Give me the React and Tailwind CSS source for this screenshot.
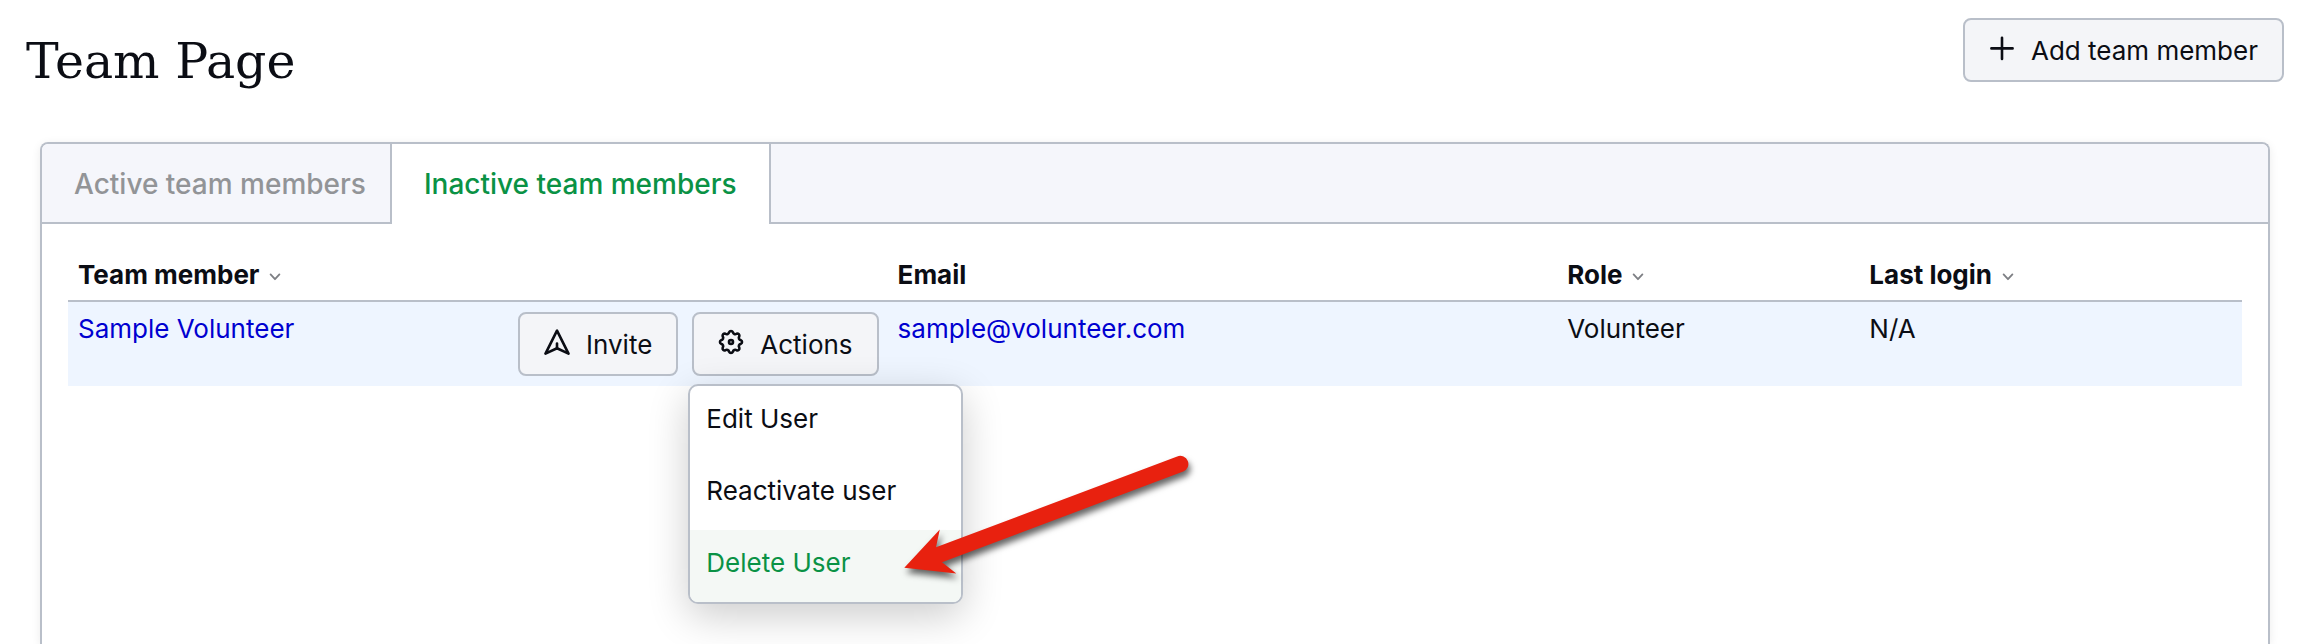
import { useState } from 'react';
import clsx from 'clsx';

const members = [
  { name: 'Sample Volunteer', email: 'sample@volunteer.com', role: 'Volunteer', lastLogin: 'N/A' },
];

const menuItems = ['Edit User', 'Reactivate user', 'Delete User'];

// Eight rounded teeth, each followed by a rounded notch
function cogPath(center, radius) {
  const point = (deg) => {
    const rad = (deg * Math.PI) / 180;
    return `${(center + radius * Math.cos(rad)).toFixed(2)} ${(center + radius * Math.sin(rad)).toFixed(2)}`;
  };
  let d = `M${point(-11)}`;
  for (let i = 0; i < 8; i++) {
    d += `A2.1 2.1 0 0 1 ${point(i * 45 + 11)}A2.3 2.3 0 0 0 ${point(i * 45 + 34)}`;
  }
  return `${d}Z`;
}

function PlusIcon() {
  return (
    <svg width="26" height="26" viewBox="0 0 26 26" fill="none" stroke="currentColor" strokeWidth="2.6" strokeLinecap="round" className="mb-1.5">
      <path d="M13 2.8V24M2.4 13.4H23.6" />
    </svg>
  );
}

function InviteIcon() {
  return (
    <svg width="26" height="26" viewBox="0 0 26 26" fill="none" stroke="currentColor" strokeWidth="2.6" strokeLinecap="round" strokeLinejoin="round" className="mb-1.5">
      <path d="M13 1.6L1.5 24.6L13 19.2L24.5 24.6Z" />
      <path d="M13 14.6V19.2" />
    </svg>
  );
}

function CogIcon() {
  return (
    <svg width="26" height="26" viewBox="0 0 26 26" fill="none" stroke="currentColor" strokeWidth="2.6" strokeLinejoin="round" className="mb-1.5">
      <path d={cogPath(13, 10)} />
      <circle cx="13" cy="13" r="2" />
    </svg>
  );
}

function SortIcon() {
  return (
    <svg width="12" height="8" viewBox="0 0 12 8" fill="none" stroke="#7d7f84" strokeWidth="1.8" strokeLinecap="round" strokeLinejoin="round" className="mt-1">
      <path d="M1.6 1.4L6 6.2L10.4 1.4" />
    </svg>
  );
}

function Button({ icon, children, ...props }) {
  return (
    <button
      type="button"
      className="flex h-16 items-center gap-4 whitespace-nowrap rounded-lg border-2 border-[#b9bfc9] bg-[#f4f5f8] px-6 pt-0.5"
      {...props}
    >
      {icon}
      {children}
    </button>
  );
}

function SortHeader({ children }) {
  return (
    <button type="button" className="flex items-center gap-2.5 font-bold">
      {children}
      <SortIcon />
    </button>
  );
}

function PointerArrow() {
  return (
    <svg
      width="310"
      height="140"
      viewBox="890 450 310 140"
      aria-hidden="true"
      className="pointer-events-none absolute left-[200px] top-16 max-w-none drop-shadow-[2px_5px_3px_rgba(0,0,0,0.6)]"
    >
      <path
        fill="#e8210f"
        d="M904.3 567.7L939.8 529.4L936 547.3L1177.2 456.4A8 8 0 0 1 1183.2 471.6L942 562.2L956.3 573.6Z"
      />
    </svg>
  );
}

function ActionsMenu() {
  const [open, setOpen] = useState(true);
  return (
    <div className="relative">
      <Button icon={<CogIcon />} aria-haspopup="menu" aria-expanded={open} onClick={() => setOpen(!open)}>
        Actions
      </Button>
      {open && (
        <div className="absolute -left-1 top-full z-10 mt-2 w-[275px] rounded-[10px] border-2 border-[#b9bfc9] bg-white shadow-[0_12px_40px_rgba(0,0,0,0.2)]">
          <div role="menu" className="overflow-hidden rounded-lg">
            {menuItems.map((item) => (
              <button
                key={item}
                type="button"
                role="menuitem"
                className={clsx(
                  'block w-full px-4 pb-[19px] pt-[13px] text-left leading-10',
                  item === 'Delete User' && 'bg-[#f4f8f5] text-[#0a9245]'
                )}
              >
                {item}
              </button>
            ))}
          </div>
          <PointerArrow />
        </div>
      )}
    </div>
  );
}

export default function App() {
  const [tab, setTab] = useState('inactive');

  return (
    <div className="flex min-h-screen flex-col overflow-hidden bg-white font-[Inter,sans-serif] text-[26px] leading-9 text-[#0b0d14]">
      <header className="flex items-start justify-between pl-[26px] pr-[30px] pt-[18px]">
        <h1 className="pt-3 font-['DejaVu_Serif',serif] text-[49px] leading-16">Team Page</h1>
        <Button icon={<PlusIcon />}>Add team member</Button>
      </header>

      <main className="ml-10 mr-11 mt-12 flex-1 rounded-t-lg border-2 border-b-0 border-[#b9bfc9] shadow-[0_2px_10px_rgba(0,0,0,0.08)]">
        <div role="tablist" className="flex overflow-hidden rounded-t-md bg-[#f5f6fb] text-[28px] font-medium">
          <button
            type="button"
            role="tab"
            aria-selected={tab === 'active'}
            onClick={() => setTab('active')}
            className={clsx(
              'h-20 border-b-2 border-r-2 border-r-[#b9bfc9] pl-8 pr-6 pt-0.5',
              tab === 'active' ? 'border-b-white bg-white text-[#0a9245]' : 'border-b-[#b9bfc9] text-[#929497]'
            )}
          >
            Active team members
          </button>
          <button
            type="button"
            role="tab"
            aria-selected={tab === 'inactive'}
            onClick={() => setTab('inactive')}
            className={clsx(
              'h-20 border-b-2 px-8 pt-0.5',
              tab === 'inactive' ? 'border-white bg-white text-[#0a9245]' : 'border-[#b9bfc9] text-[#929497]'
            )}
          >
            Inactive team members
          </button>
          <div className="flex-1 border-b-2 border-l-2 border-[#b9bfc9]" />
        </div>

        <div className="px-[26px] pt-6">
          <table className="w-full table-fixed border-collapse text-left">
            <thead>
              <tr className="border-b-2 border-[#b9bfc9]">
                <th className="w-[37.7%] px-2.5 pb-[7px] pt-[9px]"><SortHeader>Team member</SortHeader></th>
                <th className="w-[30.8%] px-2.5 pb-[7px] pt-[9px]">Email</th>
                <th className="w-[13.9%] px-2.5 pb-[7px] pt-[9px]"><SortHeader>Role</SortHeader></th>
                <th className="px-2.5 pb-[7px] pt-[9px]"><SortHeader>Last login</SortHeader></th>
              </tr>
            </thead>
            <tbody>
              {members.map((member) => (
                <tr key={member.email} className="bg-[#eef5ff] align-top leading-[34px]">
                  <td className="py-2.5 pl-2.5 pr-[9px]">
                    <div className="flex items-start justify-between">
                      <a href="#member" className="text-[#0000d0]">{member.name}</a>
                      <div className="flex gap-3.5">
                        <Button icon={<InviteIcon />}>Invite</Button>
                        <ActionsMenu />
                      </div>
                    </div>
                  </td>
                  <td className="p-2.5">
                    <a href="#email" className="text-[#0000d0]">{member.email}</a>
                  </td>
                  <td className="p-2.5">{member.role}</td>
                  <td className="p-2.5">{member.lastLogin}</td>
                </tr>
              ))}
            </tbody>
          </table>
        </div>
      </main>
    </div>
  );
}
